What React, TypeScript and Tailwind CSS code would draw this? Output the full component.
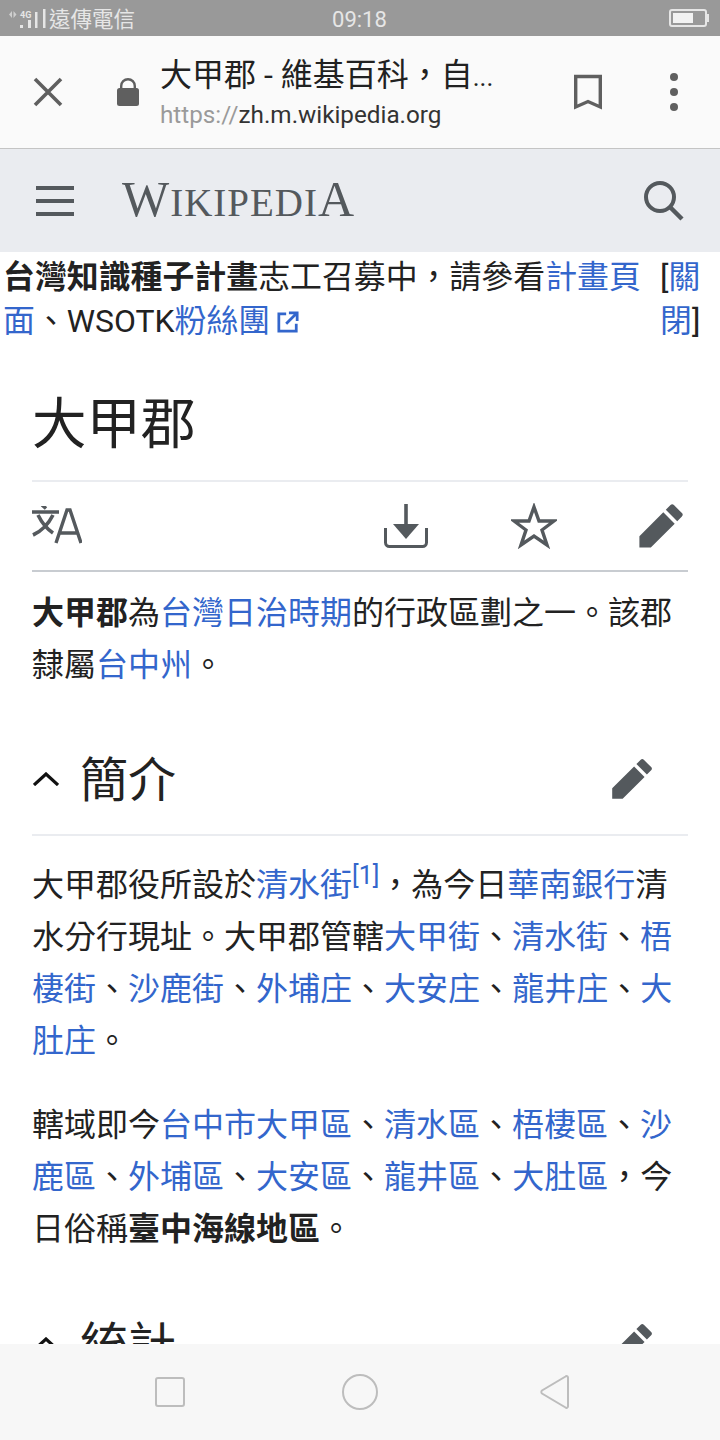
import React from 'react';

const Link = ({ children }: { children: React.ReactNode }) => (
  <span className="text-[#3366cc]">{children}</span>
);

const Pencil = ({ className }: { className: string }) => (
  <svg viewBox="0 0 20 20" className={className} fill="#54595d">
    <path d="M16.77 8l1.94-2a1 1 0 0 0 0-1.41l-3.34-3.3a1 1 0 0 0-1.41 0L12 3.23zM1 14.25V19h4.75l9.96-9.96-4.75-4.75z" />
  </svg>
);

const Chevron = () => (
  <svg viewBox="0 0 26 14" className="ml-[1px] w-[26px] h-[14px] -translate-y-[2px]" fill="none" stroke="#111" strokeWidth="3.2">
    <path d="M1 13 13 2 25 13" />
  </svg>
);

const Rule = ({ className }: { className: string }) => <div className={`h-[2px] ${className}`} />;

const SectionHead = ({ title }: { title: string }) => (
  <div className="flex items-center h-[64px]">
    <Chevron />
    <h2 className="ml-[21px] text-[48px] leading-[64px] text-[#222]">{title}</h2>
    <div className="ml-auto mr-[34px] -translate-y-[2px]">
      <Pencil className="w-[44px] h-[44px]" />
    </div>
  </div>
);

export default function App() {
  return (
    <div
      className="w-[720px] h-[1440px] flex flex-col overflow-hidden bg-white text-[#222]"
      style={{ fontFamily: 'Roboto, "Noto Sans CJK TC", sans-serif' }}
    >
      {/* phone status bar */}
      <div className="h-[36px] shrink-0 bg-[#999999] flex items-center pl-[9px] pr-[11px] text-[#e6e6e6]">
        <div className="w-[40px] h-[30px] flex items-end">
          <svg viewBox="0 0 40 30" className="w-[40px] h-[30px]" fill="#e6e6e6">
            <path d="M0 11.5 3 8V15ZM4.5 8 7.5 11.5 4.5 15Z" opacity="0.7" />
            <text x="11" y="15" fontSize="9" fontWeight="700" fontFamily="Roboto, sans-serif">4G</text>
            <rect x="11" y="22" width="3" height="3" />
            <rect x="19" y="17" width="3" height="8" />
            <rect x="26" y="9" width="2.5" height="16" />
            <rect x="34" y="6" width="2.5" height="19" />
          </svg>
        </div>
        <span className="mt-[4px] text-[21.5px] leading-[32px]">遠傳電信</span>
        <span className="mt-[4px] ml-[197px] text-[22px] leading-[32px]">09:18</span>
        <div className="ml-auto flex items-center">
          <div className="w-[38px] h-[18px] rounded-[3px] border-2 border-[#e6e6e6] p-[2px]">
            <div className="w-[20px] h-full bg-[#f2f2f2]" />
          </div>
          <div className="w-[2px] h-[8px] bg-[#e6e6e6]" />
        </div>
      </div>

      {/* browser custom tab toolbar */}
      <div className="h-[113px] shrink-0 bg-[#fafafa] border-b border-[#c4c4c4] flex items-center">
        <svg viewBox="0 0 30 30" className="ml-[33px] w-[30px] h-[30px]" fill="none" stroke="#5f5f5f" strokeWidth="3.6">
          <path d="M2 2 28 28M28 2 2 28" />
        </svg>
        <svg viewBox="0 0 22 28" className="ml-[54px] w-[22px] h-[28px]" fill="#5f5f5f">
          <path d="M3 11V8a8 8 0 0 1 16 0v3h-2.4V8a5.6 5.6 0 0 0-11.2 0v3Z" />
          <rect x="0" y="10" width="22" height="18" rx="2.5" />
        </svg>
        <div className="ml-[21px] w-[341px]">
          <div className="text-[32px] leading-[44px] text-[#212121]">
            大甲郡 - 維基百科，自<span className="text-[26px]">...</span>
          </div>
          <div className="text-[24.25px] leading-[32px] text-[#333]">
            <span className="text-[#9a9a9a]">https://</span>zh.m.wikipedia.org
          </div>
        </div>
        <svg viewBox="0 0 28 36" className="ml-[73px] w-[28px] h-[36px]" fill="none" stroke="#5f5f5f" strokeWidth="3.4">
          <path d="M1.7 33V2.5H26.3V33L14 27.5Z" />
        </svg>
        <svg viewBox="0 0 8 38" className="ml-[68px] w-[8px] h-[38px]" fill="#5f5f5f">
          <circle cx="4" cy="4" r="4" />
          <circle cx="4" cy="19" r="4" />
          <circle cx="4" cy="34" r="4" />
        </svg>
      </div>

      {/* wikipedia header */}
      <div className="h-[103px] shrink-0 bg-[#eaecf0] flex items-center">
        <div className="ml-[36px] w-[38px] flex flex-col gap-[9px]">
          <div className="h-[4px] bg-[#54595d]" />
          <div className="h-[4px] bg-[#54595d]" />
          <div className="h-[4px] bg-[#54595d]" />
        </div>
        <div
          className="ml-[48px] text-[#54595d] text-[50px] leading-[60px] tracking-[1px]"
          style={{ fontFamily: '"Liberation Serif", serif' }}
        >
          W<span className="text-[39px]">IKIPEDI</span>A
        </div>
        <svg viewBox="0 0 40 40" className="ml-auto mr-[36px] w-[40px] h-[40px]" fill="none" stroke="#54595d" strokeWidth="4">
          <circle cx="16" cy="16" r="14" />
          <path d="M26 26 38 38" strokeWidth="4.5" />
        </svg>
      </div>

      <main className="flex-1 min-h-0 overflow-hidden">
        {/* site notice */}
        <div className="flex pl-[3px] pr-[20px] text-[31.9px] leading-[44px] pt-[3px]">
          <div className="w-[642px] shrink-0">
            <b>台灣知識種子計畫</b>志工召募中，請參看<Link>計畫頁面</Link>、WSOTK<Link>粉絲團</Link>
            <svg viewBox="0 0 24 24" className="inline-block ml-[7px] w-[22px] h-[22px] align-[-1px]" fill="none" stroke="#3366cc" strokeWidth="3">
              <path d="M10 3H2V22H21V14M13 2H22V11M22 2 10 14" />
            </svg>
          </div>
          <div className="ml-[15px] w-[40px]">
            [<Link>關閉</Link>]
          </div>
        </div>

        <div className="px-[32px]">
          <h1 className="mt-[43px] text-[54.5px] leading-[76px] text-[#222]">大甲郡</h1>
          <Rule className="mt-[18px] bg-[#eaecf0]" />
          <div className="h-[88px] flex items-center">
            <svg viewBox="0 2 50 40" className="w-[50px] h-[40px]" fill="none" stroke="#54595d" strokeWidth="3.6">
              <path d="M0 8H27M10 1l4 3.5M6 11Q12 23 21 29M21 11Q14 25 1 31" />
              <path d="M24 39 35 6H38L49 39M28 29H45" strokeWidth="3.4" />
            </svg>
            <svg viewBox="0 0 44 44" className="ml-[302px] w-[44px] h-[44px]" fill="none" stroke="#54595d" strokeWidth="3">
              <path d="M22 0V22" strokeWidth="3.6" />
              <path d="M9 20H35L22 35Z" fill="#54595d" stroke="none" />
              <path d="M1.5 24V38.5a4 4 0 0 0 4 4H38.5a4 4 0 0 0 4-4V24" />
            </svg>
            <svg viewBox="0 0 46 46" className="ml-[83px] w-[46px] h-[46px]" fill="none" stroke="#54595d" strokeWidth="3.4">
              <path d="M23 4 28 18H43L31 27 36 42 23 33 10 42 15 27 3 18H18Z" />
            </svg>
            <Pencil className="ml-[80px] w-[48px] h-[48px] shrink-0" />
          </div>
          <Rule className="bg-[#c8ccd1]" />

          <p className="mt-[15px] text-[32px] leading-[52px]">
            <b>大甲郡</b>為<Link>台灣日治時期</Link>的行政區劃之一。該郡隸屬<Link>台中州</Link>。
          </p>

          <div className="mt-[58px]">
            <SectionHead title="簡介" />
          </div>
          <Rule className="mt-[21px] bg-[#eaecf0]" />

          <p className="mt-[23px] text-[32px] leading-[52px]">
            大甲郡役所設於<Link>清水街</Link>
            <sup className="text-[25px] leading-none text-[#3366cc]">[1]</sup>，為今日<Link>華南銀行</Link>清水分行現址。大甲郡管轄<Link>大甲街</Link>、<Link>清水街</Link>、<Link>梧棲街</Link>、<Link>沙鹿街</Link>、<Link>外埔庄</Link>、<Link>大安庄</Link>、<Link>龍井庄</Link>、<Link>大肚庄</Link>。
          </p>
          <p className="mt-[32px] text-[32px] leading-[52px]">
            轄域即今<Link>台中市大甲區</Link>、<Link>清水區</Link>、<Link>梧棲區</Link>、<Link>沙鹿區</Link>、<Link>外埔區</Link>、<Link>大安區</Link>、<Link>龍井區</Link>、<Link>大肚區</Link>，今日俗稱<b>臺中海線地區</b>。
          </p>

          <div className="mt-[59px]">
            <SectionHead title="統計" />
          </div>
        </div>
      </main>

      {/* android navigation keys */}
      <div className="h-[96px] shrink-0 bg-[#f7f7f7] flex items-center">
        <div className="ml-[155px] w-[30px] h-[30px] rounded-[3px] border-2 border-[#bdbdbd]" />
        <div className="ml-[157px] w-[36px] h-[36px] rounded-full border-2 border-[#bdbdbd]" />
        <svg viewBox="0 0 32 36" className="ml-[161px] w-[32px] h-[36px]" fill="none" stroke="#bdbdbd" strokeWidth="2">
          <path d="M26.5 2.5a1.5 1.5 0 0 1 2.5 1V32.5a1.5 1.5 0 0 1-2.5 1L3 19.5a2 2 0 0 1 0-3Z" />
        </svg>
      </div>
    </div>
  );
}
